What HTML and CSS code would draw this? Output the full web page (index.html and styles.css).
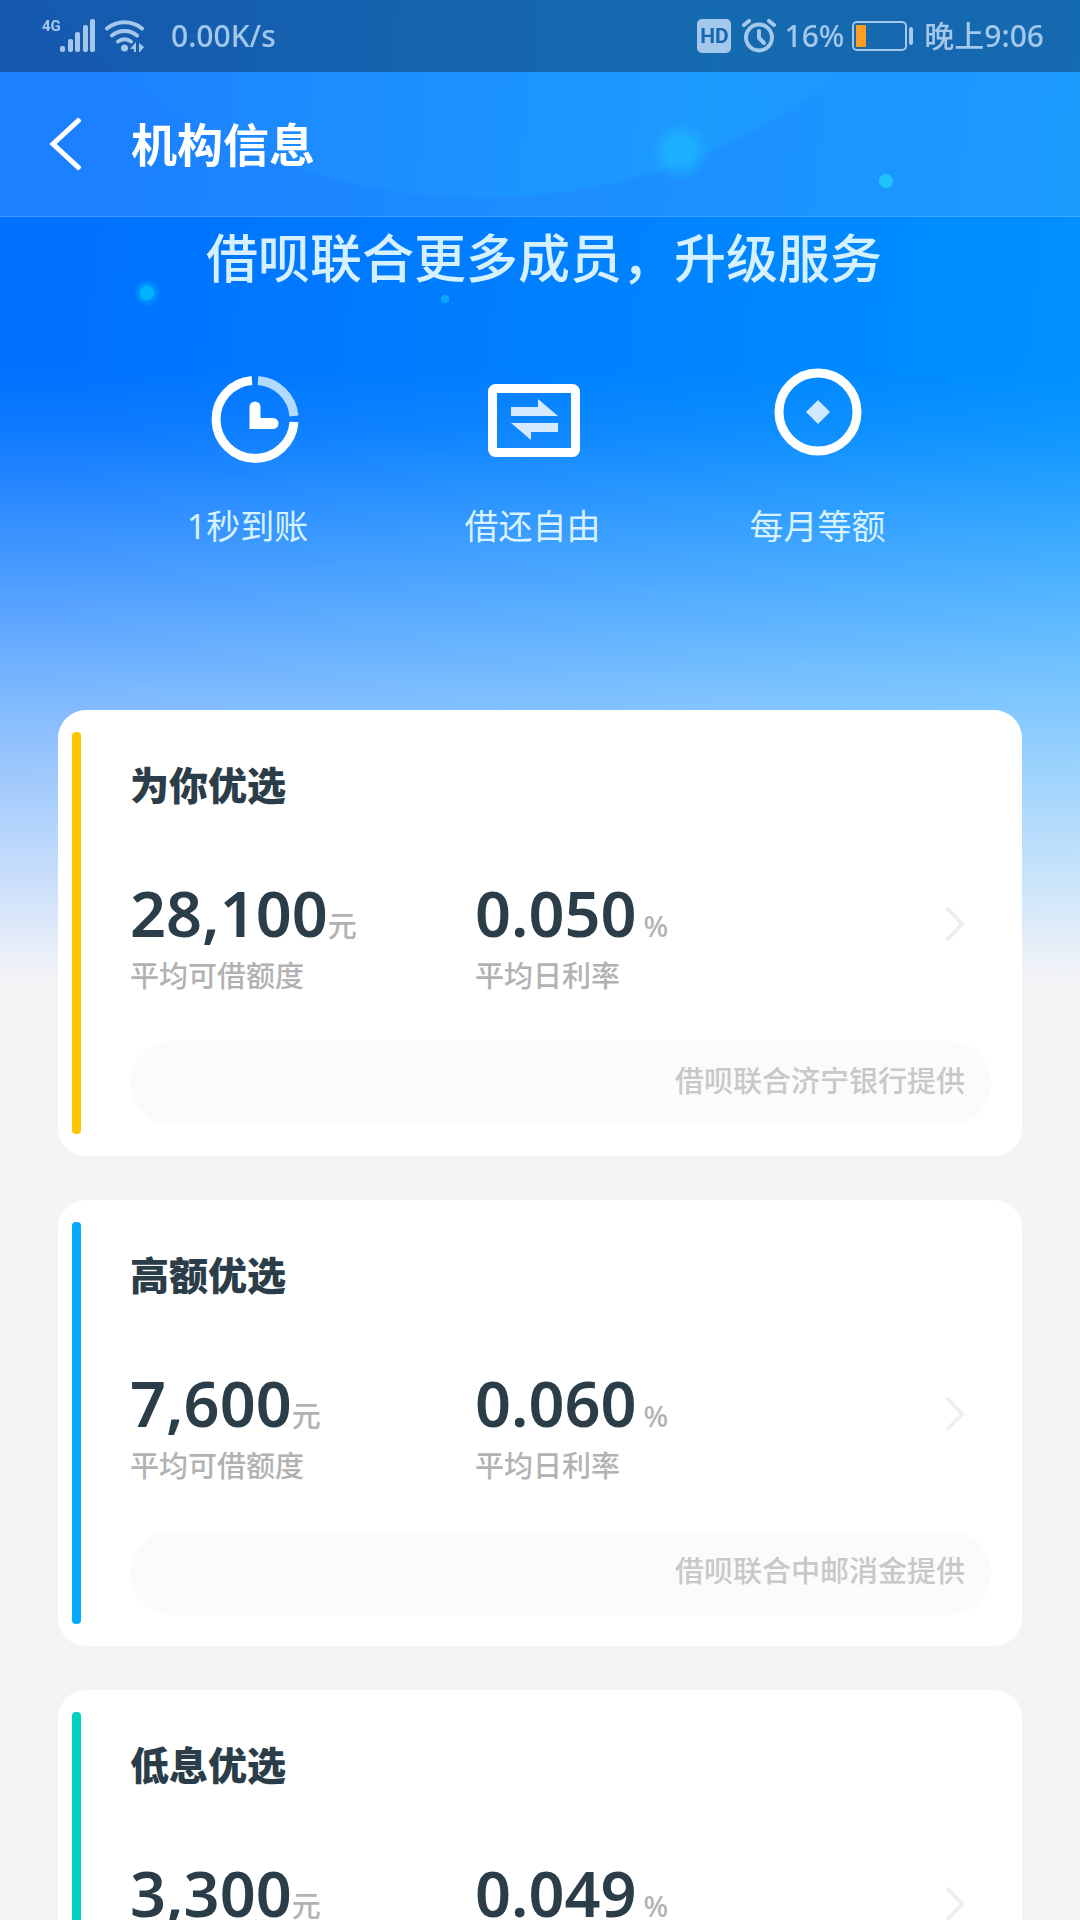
FILE: index.html
```html
<!DOCTYPE html>
<html lang="zh-CN">
<head>
<meta charset="utf-8">
<meta name="viewport" content="width=device-width, initial-scale=1">
<title>机构信息</title>
<link rel="stylesheet" href="styles.css">
</head>
<body>
<div class="page">
  <svg class="decor" viewBox="0 0 1080 400" preserveAspectRatio="xMidYMin slice" aria-hidden="true">
    <defs>
      <linearGradient id="disc" x1="0" y1="0" x2="1" y2="0">
        <stop offset="0.2" stop-color="#00a0ff" stop-opacity="0.05"/>
        <stop offset="0.7" stop-color="#00a4ff" stop-opacity="0.35"/>
        <stop offset="0.85" stop-color="#00a0ff" stop-opacity="0.1"/>
      </linearGradient>
      <radialGradient id="glow">
        <stop offset="0" stop-color="#00b0ff" stop-opacity="0.8"/>
        <stop offset="0.5" stop-color="#00b0ff" stop-opacity="0.6"/>
        <stop offset="1" stop-color="#00b0ff" stop-opacity="0"/>
      </radialGradient>
    </defs>
    <circle cx="482" cy="-383" r="581" fill="url(#disc)"/>
    <circle cx="680" cy="152" r="30" fill="url(#glow)"/>
    <circle cx="886" cy="181" r="7" fill="#06bcff"/>
    <circle cx="147" cy="293" r="7" fill="#00bcff"/>
    <circle cx="147" cy="293" r="14" fill="url(#glow)"/>
    <circle cx="445" cy="299" r="4" fill="#0aa8ff"/>
  </svg>

  <header class="top">
    <div class="status">
      <div class="status-side">
        <span class="net">4G</span>
        <svg class="signal" width="35" height="34" viewBox="0 0 35 34" aria-hidden="true">
          <g fill="currentColor">
            <rect x="0" y="27" width="5" height="6" rx="2"/>
            <rect x="8" y="20" width="5" height="13" rx="2"/>
            <rect x="15" y="13" width="5" height="20" rx="2"/>
            <rect x="23" y="6" width="5" height="27" rx="2"/>
            <rect x="30" y="0" width="5" height="33" rx="2"/>
          </g>
        </svg>
        <svg class="wifi" width="40" height="34" viewBox="0 0 40 34" aria-hidden="true">
          <g fill="none" stroke="currentColor" stroke-width="4" stroke-linecap="round">
            <path d="M2 9.500a28 28 0 0 1 35 0"/>
            <path d="M7 16.500a20 20 0 0 1 25 0"/>
            <path d="M13 22.500a11 11 0 0 1 13 0"/>
          </g>
          <circle cx="19.500" cy="29" r="3.500" fill="currentColor"/>
          <path d="M25 30l6-7v10h-2v-3zM34 24l5 4-4 5h-1z" fill="currentColor"/>
        </svg>
        <span class="speed">0.00K/s</span>
      </div>
      <div class="status-side">
        <span class="hd">HD</span>
        <svg class="alarm" width="34" height="34" viewBox="0 0 34 34" fill="none" stroke="currentColor" stroke-linecap="round" aria-hidden="true">
          <circle cx="17" cy="18.500" r="13" stroke-width="4"/>
          <path d="M17 12v7l5 5" stroke-width="4" stroke-linejoin="round"/>
          <path d="M2 6l5-4M32 6l-5-4" stroke-width="4"/>
        </svg>
        <span class="percent">16%</span>
        <svg class="battery" width="62" height="30" viewBox="0 0 62 30" aria-hidden="true">
          <rect x="1" y="1" width="53" height="28" rx="4" fill="none" stroke="currentColor" stroke-width="2"/>
          <rect x="4" y="4" width="10" height="22" rx="1" fill="#ff9f22"/>
          <rect x="57" y="6" width="4" height="18" rx="2" fill="currentColor"/>
        </svg>
        <span class="time">晚上9:06</span>
      </div>
    </div>
    <div class="nav">
      <button class="back" type="button" aria-label="返回">
        <svg width="32" height="52" viewBox="0 0 32 52" aria-hidden="true">
          <path d="M31 1L4 26l27 25" fill="none" stroke="#fff" stroke-width="5"/>
        </svg>
      </button>
      <h1 class="nav-title">机构信息</h1>
    </div>
  </header>

  <section class="hero">
    <h2 class="hero-title">借呗联合更多成员，升级服务</h2>
    <ul class="features">
      <li class="feature">
        <svg width="104" height="104" viewBox="0 0 104 104" fill="none" stroke="#fff" aria-hidden="true">
          <path d="M50 16.500A39 39 0 1 0 92 58" stroke-width="9"/>
          <path d="M56 16.500A39 39 0 0 1 92 52" stroke-width="9" stroke="#b4d9ff"/>
          <path d="M53 43v16.500h18" stroke-width="11" stroke-linecap="round"/>
        </svg>
        <span>1秒到账</span>
      </li>
      <li class="feature">
        <svg width="104" height="104" viewBox="0 0 104 104" aria-hidden="true">
          <rect x="11.500" y="24.500" width="83" height="64" rx="3" fill="none" stroke="#fff" stroke-width="9"/>
          <path d="M30 43h27v-8l20 17H30zM77 59v9H50v8L30 59z" fill="#d5eaff"/>
        </svg>
        <span>借还自由</span>
      </li>
      <li class="feature">
        <svg width="104" height="104" viewBox="0 0 104 104" aria-hidden="true">
          <circle cx="52" cy="48" r="39" fill="none" stroke="#fff" stroke-width="9"/>
          <path d="M52 36l12 12-12 12-12-12z" fill="#cfe8ff"/>
        </svg>
        <span>每月等额</span>
      </li>
    </ul>
  </section>

  <main class="cards">
    <article class="card card-yellow">
      <h3 class="card-title">为你优选</h3>
      <div class="figures">
        <div class="figure">
          <p class="value">28,100<span class="unit">元</span></p>
          <p class="label">平均可借额度</p>
        </div>
        <div class="figure">
          <p class="value">0.050<span class="unit unit-rate">%</span></p>
          <p class="label">平均日利率</p>
        </div>
        <a class="more" href="#" aria-label="为你优选">
          <svg width="20" height="36" viewBox="0 0 20 36" aria-hidden="true"><path d="M2 2l15 16L2 34" fill="none" stroke="#eee" stroke-width="4"/></svg>
        </a>
      </div>
      <p class="provider">借呗联合济宁银行提供</p>
    </article>

    <article class="card card-blue">
      <h3 class="card-title">高额优选</h3>
      <div class="figures">
        <div class="figure">
          <p class="value">7,600<span class="unit">元</span></p>
          <p class="label">平均可借额度</p>
        </div>
        <div class="figure">
          <p class="value">0.060<span class="unit unit-rate">%</span></p>
          <p class="label">平均日利率</p>
        </div>
        <a class="more" href="#" aria-label="高额优选">
          <svg width="20" height="36" viewBox="0 0 20 36" aria-hidden="true"><path d="M2 2l15 16L2 34" fill="none" stroke="#eee" stroke-width="4"/></svg>
        </a>
      </div>
      <p class="provider">借呗联合中邮消金提供</p>
    </article>

    <article class="card card-green">
      <h3 class="card-title">低息优选</h3>
      <div class="figures">
        <div class="figure">
          <p class="value">3,300<span class="unit">元</span></p>
          <p class="label">平均可借额度</p>
        </div>
        <div class="figure">
          <p class="value">0.049<span class="unit unit-rate">%</span></p>
          <p class="label">平均日利率</p>
        </div>
        <a class="more" href="#" aria-label="低息优选">
          <svg width="20" height="36" viewBox="0 0 20 36" aria-hidden="true"><path d="M2 2l15 16L2 34" fill="none" stroke="#eee" stroke-width="4"/></svg>
        </a>
      </div>
      <p class="provider"></p>
    </article>
  </main>
</div>
</body>
</html>
```
FILE: styles.css
```css
* {
  box-sizing: border-box;
  margin: 0;
  padding: 0;
}

body {
  font-family: "Noto Sans", "Noto Sans CJK SC", sans-serif;
  background: #f4f4f7;
}

svg {
  display: block;
  flex: none;
}

/* The page scrolls inside the window, under the fixed top bar */
.page {
  position: relative;
  height: 100vh;
  overflow-x: hidden;
  overflow-y: auto;
  scrollbar-width: none;
  background:
    linear-gradient(to bottom, rgba(240, 246, 255, 0) 370px, rgba(240, 246, 255, 0.06) 430px, rgba(240, 248, 255, 0.53) 700px, #f4f4f7 980px),
    linear-gradient(97deg, #0072ff 10%, #0092ff 90%);
}

.decor {
  position: absolute;
  top: 0;
  left: 0;
  width: 100%;
  height: 400px;
}

/* Status bar and navigation */
.top {
  position: sticky;
  top: 0;
  z-index: 2;
  background: rgba(255, 255, 255, 0.11);
  border-bottom: 1px solid rgba(255, 255, 255, 0.15);
}

.status {
  display: flex;
  justify-content: space-between;
  height: 72px;
  padding: 0 36px 0 42px;
  background: rgba(10, 15, 20, 0.34);
  color: #a3c8ec;
  font-size: 30px;
  font-weight: 500;
  line-height: 74px;
}

.status-side {
  display: flex;
  align-items: center;
}

.net {
  width: 18px;
  margin-bottom: 20px;
  font-family: Roboto, sans-serif;
  font-size: 15px;
  font-weight: 700;
  line-height: 16px;
}

.wifi {
  margin-left: 10px;
}

.speed {
  margin-left: 26px;
}

.hd {
  width: 34px;
  height: 34px;
  border-radius: 5px;
  background: #a3c8ec;
  color: #1667ad;
  font-family: Roboto, sans-serif;
  font-size: 21px;
  font-weight: 700;
  line-height: 34px;
  text-align: center;
}

.alarm {
  margin-left: 11px;
}

.percent {
  margin-left: 8px;
}

.battery {
  margin-left: 8px;
}

.time {
  margin-left: 10px;
}

.nav {
  display: flex;
  align-items: center;
  gap: 50px;
  height: 144px;
  padding-left: 49px;
}

.back {
  border: 0;
  background: none;
}

.nav-title {
  color: #fff;
  font-size: 46px;
  font-weight: 600;
  line-height: 64px;
}

/* Banner */
.hero {
  position: relative;
  padding: 9px 0 160px;
}

.hero-title {
  padding-left: 8px;
  color: #d5f0ff;
  font-size: 52px;
  font-weight: 500;
  line-height: 64px;
  text-align: center;
}

.features {
  display: grid;
  grid-template-columns: repeat(3, 1fr);
  margin-top: 74px;
  padding: 0 120px 0 105px;
  list-style: none;
}

.feature {
  display: flex;
  flex-direction: column;
  align-items: center;
  gap: 34px;
  color: #d8f2ff;
  font-size: 34px;
  line-height: 48px;
}

.feature:first-child svg {
  margin-left: 12px;
}

/* Offer cards */
.cards {
  position: relative;
  display: grid;
  gap: 44px;
  padding: 0 58px 44px;
}

.card {
  position: relative;
  padding: 55px 31px 31px 72px;
  border-radius: 28px;
  background: #fff;
}

.card::before {
  content: "";
  position: absolute;
  top: 22px;
  bottom: 22px;
  left: 14px;
  width: 9px;
  border-radius: 4px;
  background: var(--accent);
}

.card-yellow {
  --accent: #fdc500;
}

.card-blue {
  --accent: #05aaff;
}

.card-green {
  --accent: #00d0c0;
}

.card-title {
  color: #2b3d49;
  font-size: 39px;
  font-weight: 900;
  line-height: 40px;
}

.figures {
  display: grid;
  grid-template-columns: 345px 1fr auto;
  margin-top: 76px;
}

.value {
  color: #2b3d49;
  font-size: 63px;
  font-weight: 600;
  line-height: 64px;
}

.unit {
  color: #b2b2b2;
  font-size: 29px;
  font-weight: 500;
  line-height: 29px;
}

.unit-rate {
  margin-left: 7px;
}

.label {
  margin-top: 13px;
  color: #b2b2b2;
  font-size: 29px;
  font-weight: 500;
  line-height: 36px;
}

.more {
  align-self: start;
  margin: 25px 26px 0 0;
}

.provider {
  height: 84px;
  margin-top: 47px;
  padding-right: 26px;
  border-radius: 42px;
  background: #fbfbfb;
  color: #c8c8c8;
  font-size: 29px;
  font-weight: 500;
  line-height: 80px;
  text-align: right;
}
```
